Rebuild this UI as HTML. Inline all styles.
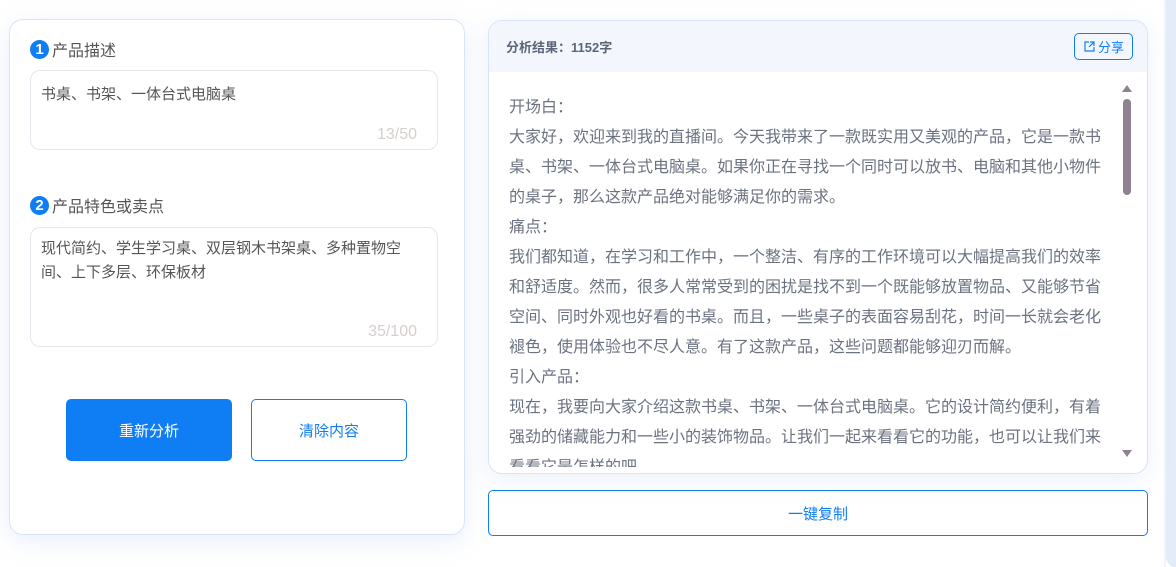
<!DOCTYPE html>
<html><head><meta charset="utf-8"><style>
*{box-sizing:border-box;margin:0;padding:0}
body{width:1176px;height:567px;background:#fff;font-family:"Liberation Sans","Noto Sans CJK SC",sans-serif;position:relative;overflow:hidden}
.strip{position:absolute;right:0;top:0;width:10px;height:567px;background:#e3ecf8;border-bottom-left-radius:12px}
.strip2{position:absolute;right:10px;top:0;width:2px;height:567px;background:#f1f5fb}
.left{position:absolute;left:9px;top:19px;width:456px;height:516px;background:#fff;border:1px solid #d9e5f5;border-radius:14px;box-shadow:0 6px 24px rgba(190,210,240,.35)}
.lab{position:absolute;left:20px;font-size:16px;color:#555;display:flex;align-items:center}
.num{width:19px;height:19px;border-radius:50%;background:#0f7ef5;color:#fff;font-size:15px;font-weight:bold;display:inline-flex;align-items:center;justify-content:center;margin-right:3px}
.ta{position:absolute;left:20px;width:408px;border:1px solid #e4e7ed;border-radius:10px;font-size:15px;color:#555;padding:12px 10px;line-height:24px}
.cnt{position:absolute;right:20px;bottom:2px;color:#d6cfcc;font-size:16px}
.btn1{position:absolute;left:56px;top:379px;width:166px;height:62px;background:#0f7ef5;border-radius:5px;color:#fff;font-size:15px;display:flex;align-items:center;justify-content:center}
.btn2{position:absolute;left:241px;top:379px;width:156px;height:62px;border:1px solid #0f7ef5;border-radius:5px;color:#0f7ef5;font-size:15px;display:flex;align-items:center;justify-content:center}
.right{position:absolute;left:488px;top:20px;width:660px;height:454px;border:1px solid #d6e4f7;border-radius:14px;background:#fff;overflow:hidden;box-shadow:0 6px 24px rgba(190,210,240,.3)}
.hd{height:51px;background:#f3f7fd;display:flex;align-items:center;justify-content:space-between;padding:0 14px 0 17px}
.hd b{font-size:13px;color:#5c6679}
.share{border:1px solid #0f7ef5;border-radius:5px;color:#0f7ef5;font-size:13px;padding:3px 8px;display:flex;align-items:center;gap:2px}
.body{position:absolute;left:20px;top:72px;width:600px;height:374px;overflow:hidden;font-size:16px;line-height:30px;color:#6b7280}
.sb{position:absolute;left:634px;top:78px;width:8px;height:96px;border-radius:4px;background:#8e8290}
.up,.dn{position:absolute;left:633px;width:0;height:0;border-left:5px solid transparent;border-right:5px solid transparent}
.up{top:64px;border-bottom:7px solid #8e8290}
.dn{top:429px;border-top:7px solid #8e8290}
.copy{position:absolute;left:488px;top:490px;width:660px;height:46px;border:1px solid #0f7ef5;border-radius:5px;color:#0f7ef5;font-size:15px;display:flex;align-items:center;justify-content:center}
</style></head><body>
<div class="strip2"></div><div class="strip"></div>
<div class="left">
 <div class="lab" style="top:17px"><span class="num">1</span>产品描述</div>
 <div class="ta" style="top:50px;height:80px">书桌、书架、一体台式电脑桌<span class="cnt">13/50</span></div>
 <div class="lab" style="top:173px"><span class="num">2</span>产品特色或卖点</div>
 <div class="ta" style="top:207px;height:120px;padding-top:9px">现代简约、学生学习桌、双层钢木书架桌、多种置物空间、上下多层、环保板材<span class="cnt">35/100</span></div>
 <div class="btn1">重新分析</div>
 <div class="btn2">清除内容</div>
</div>
<div class="right">
 <div class="hd"><b>分析结果：1152字</b><span class="share"><svg width="13" height="13" viewBox="0 0 13 13" fill="none" stroke="#0f7ef5" stroke-width="1.2"><path d="M6 2H2v9h9V7"/><path d="M7 2h4v4M11 2L6 7"/></svg>分享</span></div>
 <div class="body">开场白：<br>大家好，欢迎来到我的直播间。今天我带来了一款既实用又美观的产品，它是一款书桌、书架、一体台式电脑桌。如果你正在寻找一个同时可以放书、电脑和其他小物件的桌子，那么这款产品绝对能够满足你的需求。<br>痛点：<br>我们都知道，在学习和工作中，一个整洁、有序的工作环境可以大幅提高我们的效率和舒适度。然而，很多人常常受到的困扰是找不到一个既能够放置物品、又能够节省空间、同时外观也好看的书桌。而且，一些桌子的表面容易刮花，时间一长就会老化褪色，使用体验也不尽人意。有了这款产品，这些问题都能够迎刃而解。<br>引入产品：<br>现在，我要向大家介绍这款书桌、书架、一体台式电脑桌。它的设计简约便利，有着强劲的储藏能力和一些小的装饰物品。让我们一起来看看它的功能，也可以让我们来看看它是怎样的吧。</div>
 <div class="up"></div><div class="sb"></div><div class="dn"></div>
</div>
<div class="copy">一键复制</div>
</body></html>
